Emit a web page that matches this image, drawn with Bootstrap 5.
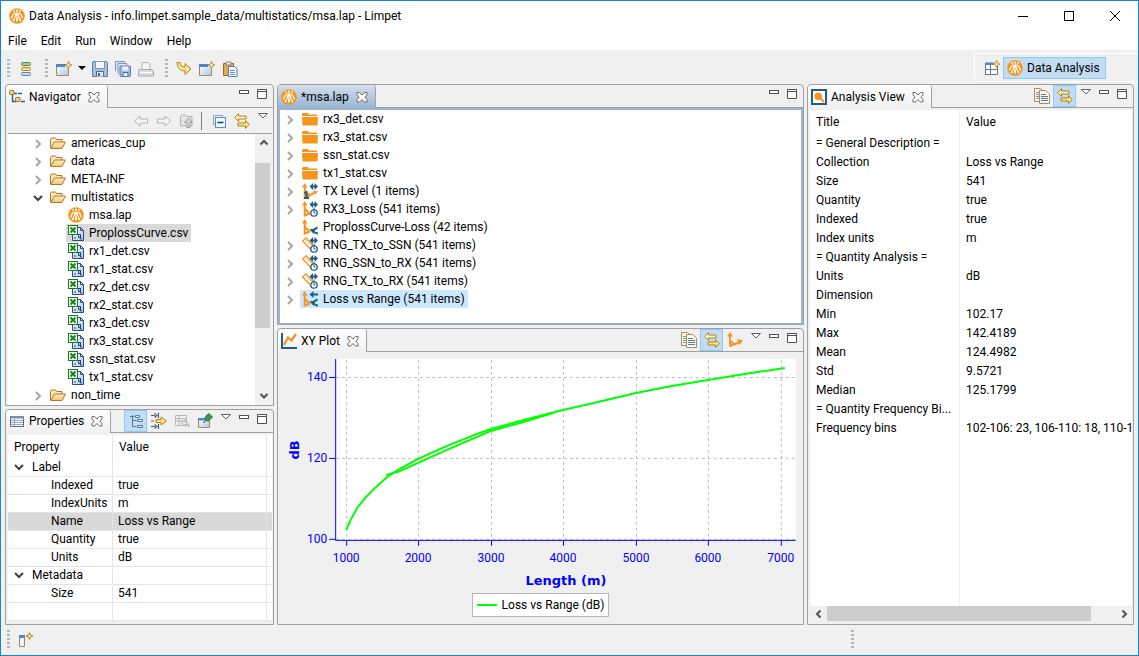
<!DOCTYPE html>
<html lang="en">
<head>
<meta charset="utf-8">
<meta name="viewport" content="width=device-width, initial-scale=1">
<title>Data Analysis - Limpet</title>
<link href="https://cdn.jsdelivr.net/npm/bootstrap@5.3.0/dist/css/bootstrap.min.css" rel="stylesheet">
<style>
  :root { --face: #f0f0f0; --edge: #a0a0a0; --hot: #c1dcf3; --hot-edge: #90c8f6; --frame: #99b4d1; }
  body { font-family: Roboto, "Open Sans", sans-serif; font-size: 12px; line-height: 18px; color: #000; background: var(--face); }
  .app { border: 1px solid #1883d7; background: var(--face); }
  svg { display: block; flex: none; }
  .ic { width: 16px; height: 16px; }
  button { font: inherit; color: inherit; }
  .flat { border: 0; background: none; padding: 0; display: flex; align-items: center; justify-content: center; }

  .title-row { height: 30px; padding-left: 8px; background: #fff; }
  .win-btn { width: 46px; height: 30px; }
  .menu-row { height: 19px; background: #fff; }
  .menu-row a { color: #000; text-decoration: none; padding: 0 7px; }
  .tool-row { height: 34px; }
  .tool-group { padding: 3px 0 0 6px; }
  .tool { width: 23px; height: 22px; }
  .tool.arrow { width: 13px; }
  .grip { width: 3px; height: 20px; margin-right: 4px; background: repeating-linear-gradient(#b4b4b4 0 2px, transparent 2px 4px); }
  .perspectives { border: solid #fff; border-width: 1px 0 1px 1px; border-radius: 4px 0 0 4px; height: 29px; width: 164px; padding: 1px 0 0 5px; }
  .perspective-on { height: 22px; padding: 0 5px 0 3px; border: 1px solid var(--hot-edge); background: var(--hot); gap: 4px; }

  .workbench { gap: 3px; padding: 0 4px; }
  .stack { gap: 3px; flex-basis: 0; }
  .w-left { flex-grow: 269; } .w-mid { flex-grow: 527; } .w-right { flex-grow: 327; }
  .view { border: 1px solid var(--edge); border-radius: 4px 4px 0 0; min-height: 0; flex-basis: 0; }
  .h-nav { flex-grow: 322; } .h-props { flex-grow: 216; } .h-edit { flex-grow: 241; } .h-plot { flex-grow: 297; } .h-full { flex-grow: 1; }
  .view-head { height: 23px; flex: none; background: linear-gradient(var(--edge), var(--edge)) bottom / 100% 1px no-repeat; padding-right: 2px; }
  .view-tab { height: 23px; padding: 0 6px 0 3px; gap: 4px; border-right: 1px solid var(--edge); border-radius: 4px 3px 0 0; background: linear-gradient(#fff, #f0f0f0); }
  .editor-tab { background: linear-gradient(#d3e0ee, #99b4d1); }
  .shut { width: 14px; height: 14px; margin-left: 2px; }
  .btns { height: 21px; }
  .on { background: var(--hot); border: 1px solid var(--hot-edge); }
  .w-tri { width: 19px; } .w-win { width: 18px; }
  .w-tri, .w-win { padding-top: 1px; }
  .pane { margin: 0 1px 0 2px; background: #fff; min-height: 0; }
  .pane-grid { margin-top: 2px; }
  .nav-tools { height: 26px; margin: 0 1px 0 2px; border-bottom: 1px solid var(--edge); }
  .nav-tools .w-tri { margin-bottom: 6px; }
  .divider { width: 1px; height: 18px; background: #808080; margin: 0 5px 0 3px; }

  .tree li > .node { display: flex; height: 18px; padding-left: 22px; }
  .tree ul .node { padding-left: 40px; }
  .editor-tree li > .node { padding-left: 2px; }
  .twist { width: 16px; height: 20px; margin-right: 2px; }
  .lab { display: flex; align-items: center; gap: 5px; padding: 0 3px 0 2px; white-space: nowrap; }
  .lab.dim { background: #d9d9d9; } .lab.pick { background: #cce8ff; }
  .editor-frame { background: #fff; border: solid var(--frame); border-width: 2px 2px 1px; min-height: 0; }

  .vbar { width: 17px; background: var(--face); }
  .vbar button { height: 18px; }
  .vbar .thumb { background: #cdcdcd; width: 15px; margin: 11px 0 59px; }
  .hbar { height: 18px; margin: 0 1px 0 2px; }
  .hbar .thumb { background: #cdcdcd; height: 15px; margin-right: 24px; }
  .hbar button { width: 17px; height: 15px; }

  .data-grid { width: 100%; table-layout: fixed; border-collapse: separate; border-spacing: 0; }
  .data-grid th, .data-grid td { font-weight: 400; padding: 0; white-space: nowrap; overflow: hidden; text-overflow: clip; }
  .data-grid thead th { height: 24px; line-height: 24px; }
  .props th, .props td { border-right: 1px solid #e5e5e5; }
  .props tr > :last-child { border-right: 0; }
  .props tbody td { height: 18px; line-height: 17px; border-bottom: 1px solid #e5e5e5; }
  .props tbody td:nth-child(2) { padding-left: 5px; }
  .props thead th { padding-left: 6px; }
  .props .leaf { padding-left: 43px; }
  .props .group { display: flex; height: 17px; padding-left: 3px; gap: 5px; }
  .props .group .twist { height: 17px; margin: 0; }
  .props .picked td { background: #d9d9d9; }
  .analysis { background: linear-gradient(#e6eef7, #e6eef7) 149px 0 / 1px 100% no-repeat #fff; }
  .analysis td, .analysis th { padding-left: 6px; line-height: 19px; }
  .analysis td:first-child { text-overflow: ellipsis; padding-right: 4px; }

  .plot-area { min-height: 0; }
  .plot-area svg { width: 100%; height: 100%; min-height: 0; }
  .plot-area text { font-size: 12px; fill: #00f; }
  .plot-area .axis-name { font-family: "DejaVu Sans", sans-serif; font-weight: 700; font-size: 13px; }
  .legend-box { height: 24px; border: 1px solid #b8b8b8; background: #fff; padding: 0 4px; gap: 5px; margin-bottom: 7px; }
  .legend-line { width: 20px; height: 2px; background: #0f0; }
  .status-row { height: 30px; padding: 0 6px; }
</style>
</head>
<body>
<svg width="0" height="0" class="position-absolute" aria-hidden="true">
  <defs>
    <linearGradient id="gFold" x1="0" y1="0" x2="0" y2="1"><stop offset="0" stop-color="#fff3cf"/><stop offset="1" stop-color="#f0c468"/></linearGradient>
    <linearGradient id="gBlue" x1="0" y1="0" x2="1" y2="1"><stop offset="0" stop-color="#fff"/><stop offset="1" stop-color="#a9c8ea"/></linearGradient>
    <symbol id="limpet" viewBox="0 0 16 16"><circle cx="8" cy="8" r="7.8" fill="#f7941e"/><g fill="none" stroke="#fff" stroke-width="1.1"><path d="M8 3.500v9M7.200 5.500C6.500 8 5.800 10 4.600 12.500M8.800 5.500c.7 2.500 1.400 4.500 2.600 7M6.500 4.800C4.500 5.500 3.500 7 2.800 9.500M9.500 4.800c2 .7 3 2.200 3.700 4.700"/></g><g fill="#fff"><circle cx="5" cy="2.900" r=".9"/><circle cx="8" cy="2.600" r="1"/><circle cx="11" cy="2.900" r=".9"/><circle cx="2.700" cy="9.700" r=".8"/><circle cx="13.300" cy="9.700" r=".8"/><circle cx="4.600" cy="12.300" r="1"/><circle cx="11.400" cy="12.300" r="1"/><rect x="7.200" y="10" width="1.600" height="3.500"/></g></symbol>
    <symbol id="chev" viewBox="0 0 16 16"><path d="M6 4l4 4-4 4" fill="none" stroke="#a6a6a6" stroke-width="2"/></symbol>
    <symbol id="chevDown" viewBox="0 0 16 16"><path d="M4 6l4 4 4-4" fill="none" stroke="#404040" stroke-width="2"/></symbol>
    <symbol id="sbUp" viewBox="0 0 16 16"><path d="M4.500 9.500L8 6l3.500 3.500" fill="none" stroke="#505050" stroke-width="2"/></symbol>
    <symbol id="sbDown" viewBox="0 0 16 16"><path d="M4.500 6L8 9.500 11.500 6" fill="none" stroke="#505050" stroke-width="2"/></symbol>
    <symbol id="sbLeft" viewBox="0 0 16 16"><path d="M9.500 4.500L6 8l3.500 3.500" fill="none" stroke="#505050" stroke-width="2"/></symbol>
    <symbol id="sbRight" viewBox="0 0 16 16"><path d="M6.500 4.500L10 8l-3.500 3.500" fill="none" stroke="#505050" stroke-width="2"/></symbol>
    <symbol id="folder" viewBox="0 0 16 16"><path d="M.5 13V4.500l1-1.500h4l1 1.500h5.500v2.500" fill="#fbe6b0" stroke="#b3762b"/><path d="M.8 13.500L4.500 7h11L12 13.500z" fill="url(#gFold)" stroke="#b3762b"/></symbol>
    <symbol id="orangeFolder" viewBox="0 0 16 16"><path d="M1 2h5l1 1.500h8V5H0V3zM0 6h16l-.5 8.500H.5z" fill="#f7941e"/></symbol>
    <symbol id="csv" viewBox="0 0 16 16"><path d="M4.500 2.500h8l3 3v10h-11z" fill="url(#gBlue)" stroke="#2c4a86"/><path d="M12.500 2.500v3h3" fill="none" stroke="#2c4a86"/><rect x=".5" y=".5" width="9" height="9" fill="#eaf6e8" stroke="#1a7b23"/><path d="M2.500 2.500l5 5M7.500 2.500l-5 5" stroke="#1a7b23" stroke-width="1.800"/><path d="M10.500 9.500h2v3h-2zM12.500 9.500v4.500h1.500M6 13h2" fill="none" stroke="#243f78"/></symbol>
    <symbol id="xshut" viewBox="0 0 14 14"><path d="M2 2.500h2.500L7 5l2.500-2.500H12V5L9.800 7l2.200 2.500V12H9.500L7 9.500 4.500 12H2V9.500L4.200 7 2 5z" fill="#fdfdfd" stroke="#6c6c6c"/></symbol>
    <symbol id="vmin" viewBox="0 0 16 16"><rect x="3.500" y="4.500" width="9" height="3" fill="#fff" stroke="#505050"/></symbol>
    <symbol id="vmax" viewBox="0 0 16 16"><path d="M3.500 3.500h9v9h-9zM3.500 5.500h9" fill="#fff" stroke="#505050"/></symbol>
    <symbol id="vtri" viewBox="0 0 16 16"><path d="M3.500 3.500h9L8 8z" fill="#fff" stroke="#606060"/></symbol>
    <symbol id="navi" viewBox="0 0 16 16"><path d="M3.500 6v6.500h4M9 4.500h4M12 12.500h4M5 4.500h3" fill="none" stroke="#1f5f9d" stroke-width="1.400"/><rect x=".5" y="1.500" width="4.500" height="4" rx="1" fill="#f4cf86" stroke="#a8691c"/><rect x="6.500" y="8.500" width="4.500" height="4" rx="1" fill="#f4cf86" stroke="#a8691c"/></symbol>
    <symbol id="bars" viewBox="0 0 16 16"><rect x="3.500" y="1.500" width="9" height="3" rx="1" fill="#9fcf9c" stroke="#4e8a55"/><rect x="3.500" y="6.500" width="9" height="3" rx="1" fill="#ffe07c" stroke="#bc8a1c"/><rect x="3.500" y="11.500" width="9" height="3" rx="1" fill="#c4dbf3" stroke="#5b83b4"/></symbol>
    <symbol id="newwin" viewBox="0 0 16 16"><path d="M.5 3.500h12v11H.5z" fill="url(#gBlue)" stroke="#a88a50"/><path d="M0 3h9v3H0z" fill="#4f86c6"/><path d="M12.500 0l1 3 2.500 1-2.500 1-1 3-1-3L9 4l2.500-1z" fill="#ffeaa0" stroke="#b48a28" stroke-width=".8"/></symbol>
    <symbol id="save" viewBox="0 0 16 16"><path d="M1 .5h13.500l1 1v14H.5V1z" fill="#a9bfde" stroke="#5b7daf"/><rect x="3.500" y=".5" width="9" height="7" fill="#f4f6fb" stroke="#7b97c2"/><path d="M4.500 15.500v-5h7v5" fill="#e6ecf6" stroke="#49699c"/><path d="M6 12h2v3H6z" fill="#49699c"/></symbol>
    <symbol id="saveall" viewBox="0 0 16 16"><path d="M.5 10V.5h9v2M3 12.500V2.500h9v2" fill="#dce6f4" stroke="#8095b8"/><rect x="5" y="5" width="10.500" height="10.500" rx="1" fill="#a9bfde" stroke="#5b7daf"/><path d="M7.500 5.500h5.500v4H7.500z" fill="#f4f6fb"/><path d="M8 15v-3.500h5V15" fill="#e6ecf6" stroke="#49699c"/></symbol>
    <symbol id="print" viewBox="0 0 16 16"><path d="M4 8.500V1.500h6l2 2v5" fill="#f6f6f6" stroke="#b5b5b5"/><path d="M1 8.500h13l1.500 2v4.500H.5v-4.500z" fill="#dcdcdc" stroke="#aaa"/><path d="M2 11.500h12" stroke="#fff"/></symbol>
    <symbol id="curve" viewBox="0 0 16 16"><path d="M1 1.500h3c0 3 1.500 4.500 5 4.500V2.500L15 8l-6 5.500V10C4 10 1.500 6.500 1 1.500z" fill="#ffe191" stroke="#b4861e"/></symbol>
    <symbol id="paste" viewBox="0 0 16 16"><path d="M1.500 2.500h10v12h-10z" fill="#dda95a" stroke="#9c6c28"/><path d="M4 1h5v3H4z" fill="#e8e8e8" stroke="#777" stroke-width=".8"/><path d="M6.500 5.500h6l2.500 2.500v7.500H6.500z" fill="#f4f8ff" stroke="#5b7daf"/><path d="M8 9.500h5M8 11.500h5M8 13.500h5" stroke="#6e8fc4"/></symbol>
    <symbol id="persp" viewBox="0 0 16 16"><path d="M1.500 3.500h12v11h-12zM1.500 9.500h12M6.500 5v9" fill="#fff" stroke="#5f7f86"/><path d="M1 2.500h9v2.500H1z" fill="#4f86c6"/><path d="M12.500 0l1 3 2.500 1-2.500 1-1 3-1-3L9 4l2.500-1z" fill="#ffeaa0" stroke="#b48a28" stroke-width=".8"/></symbol>
    <symbol id="back" viewBox="0 0 16 16"><path d="M1.500 8L7 3v3h7.500v4H7v3z" fill="#f7f7f7" stroke="#b4b4b4"/></symbol>
    <symbol id="fwd" viewBox="0 0 16 16"><path d="M14.500 8L9 3v3H1.500v4H9v3z" fill="#f7f7f7" stroke="#b4b4b4"/></symbol>
    <symbol id="updir" viewBox="0 0 16 16"><path d="M1.500 13V3.500L3 2h3l1.500 1.500H13v9.500z" fill="#e4e4e4" stroke="#b0b0b0"/><path d="M9.500 5l4 4.500h-2.500v5H8v-5H5.500z" fill="#d5d5d5" stroke="#a0a0a0"/></symbol>
    <symbol id="collapse" viewBox="0 0 16 16"><path d="M2.500 2.500h9v2M2.500 2.500v9h2" fill="none" stroke="#7fa7cc"/><rect x="4.500" y="4.500" width="10" height="10" fill="#eef6ff" stroke="#5b8fc0"/><path d="M6.500 9.500h6" stroke="#123f74" stroke-width="1.600"/></symbol>
    <symbol id="sync" viewBox="0 0 16 16"><path d="M.7 4.500L4.500.6V3h7.500v3H4.500v2.400z" fill="#fff3c4" stroke="#b4801a"/><path d="M15.300 11.500L11.500 7.600V10H4v3h7.500v2.400z" fill="#ffe083" stroke="#b4801a"/></symbol>
    <symbol id="ptable" viewBox="0 0 16 16"><path d="M1.500 3.500h13v10h-13z" fill="#fff" stroke="#5c6b86"/><path d="M1 3h14v2.500H1z" fill="#7b8db0"/><path d="M2 7.500h12M2 9.500h12M2 11.500h12M5.500 5v8" stroke="#96a9c8"/></symbol>
    <symbol id="cats" viewBox="0 0 16 16"><path d="M4.500 2v11.500h4M4.500 7.500h4M2 3.500h4.500" fill="none" stroke="#567096"/><path d="M9.500 6.500h5v2h-5zM9.500 12.500h5v2h-5zM7.500 2.500h4v2h-4z" fill="#dceafa" stroke="#567096" stroke-width=".9"/></symbol>
    <symbol id="filt" viewBox="0 0 16 16"><path d="M0 2.500h4M0 13.500h4M7.500 0v5M7.500 11v5M3.500.5l2.500 2-2.500 2M3.500 11.500l2.500 2-2.500 2M0 8h3" fill="none" stroke="#476089" stroke-width="1.200"/><path d="M5 6.500h5V4l5.500 4-5.500 4V9.500H5z" fill="#ffe083" stroke="#b4801a"/></symbol>
    <symbol id="restore" viewBox="0 0 16 16"><path d="M1.500 2.500h11v10h-11zM1.500 5.500h11M1.500 8h11M5 3v9" fill="#f3f3f3" stroke="#b8b8b8"/><path d="M7 10l4-3v2c3 0 4 2 4 5-1-2-2-2.500-4-2.500v1.500z" fill="#eee" stroke="#aaa"/></symbol>
    <symbol id="pinwin" viewBox="0 0 16 16"><path d="M1.500 5.500h11v9h-11z" fill="url(#gBlue)" stroke="#a88a50"/><path d="M1 5h9v2.500H1z" fill="#4f86c6"/><path d="M6.500 10l3-3.500" stroke="#333"/><path d="M9 3l3-2.500L15.500 4 13 6.500l-2 2L8 5.500z" fill="#3c9850" stroke="#19602a" stroke-width=".8"/></symbol>
    <symbol id="copy" viewBox="0 0 16 16"><path d="M.5.500h6l2 2V13.500h-8z" fill="#fbf5df" stroke="#a09060"/><path d="M2 4.500h3M2 6.500h3M2 8.500h3M2 10.500h3" stroke="#7d93bd"/><path d="M5.500 2.500h6l4 3.500v9.500h-10z" fill="#fdfaec" stroke="#a09060"/><path d="M7 6.500h5M7 8.500h7M7 10.500h7M7 12.500h7" stroke="#5776b4"/></symbol>
    <symbol id="lens" viewBox="0 0 16 16"><rect x="1" y="1" width="14" height="14" fill="#fff" stroke="#1f5d85" stroke-width="2"/><circle cx="7.200" cy="7.200" r="3.800" fill="#f7941e"/><path d="M9 9l4 4" stroke="#f7941e" stroke-width="2"/></symbol>
    <symbol id="xy" viewBox="0 0 16 16"><path d="M1 0v15h15" fill="none" stroke="#1f5d85" stroke-width="2"/><path d="M3 12l4-7.500 3.500 3L15 1" fill="none" stroke="#f7941e" stroke-width="2.200"/></symbol>
    <symbol id="axes" viewBox="0 0 16 16"><path d="M3 14.500V3M3 14l9-3.500M3 8.500l4.500 4" fill="none" stroke="#f7941e" stroke-width="1.900"/><path d="M0 4.500L3 0l3 4.500zM10 7l6 1.500-3.500 4.500z" fill="#f7941e"/></symbol>
    <symbol id="oAxis" viewBox="0 0 16 16"><path d="M2.700 3v11.500L8 12.500M3 8l5 5" fill="none" stroke="#f7941e" stroke-width="2"/><path d="M0 4.500L2.700 0 5.500 4.500z" fill="#f7941e"/></symbol>
    <symbol id="bArrows" viewBox="0 0 16 16"><path d="M7.500 3.500l3.500-3.500v7zM16 3.500L12.500 0v7z" fill="#1f5d85"/><path d="M10 3.500h4" stroke="#1f5d85" stroke-width="2"/></symbol>
    <symbol id="txl" viewBox="0 0 16 16"><use href="#oAxis"/><use href="#bArrows"/><path d="M7 12.500l5-2.500" stroke="#f7941e" stroke-width="2"/><path d="M11 8h5l-3 4z" fill="#f7941e"/><path d="M2 9.500l2-1.500h1.500v6h1.500v2H2v-2h1.500v-3.500H2z" fill="#1f5d85"/></symbol>
    <symbol id="loss" viewBox="0 0 16 16"><use href="#oAxis"/><use href="#bArrows"/><circle cx="12" cy="12" r="3.200" fill="#fff" stroke="#1f5d85" stroke-width="1.300"/><path d="M12 10v2h1.500M12 7v2" fill="none" stroke="#1f5d85"/></symbol>
    <symbol id="prop" viewBox="0 0 16 16"><use href="#oAxis"/><path d="M7.500 10h5l-1 5z" fill="#1f5d85"/><path d="M15.500 8.500C13 9.500 11.500 11 11 12c1.500 1.800 3 2.500 5 2.500" fill="none" stroke="#1f5d85" stroke-width="1.900"/></symbol>
    <symbol id="ruler" viewBox="0 0 16 16"><path d="M.7 4L4 .8l10 11-3 3z" fill="#fff" stroke="#f7941e" stroke-width="1.300"/><path d="M5.500 3L4 4.500M7.500 5L6 6.500M9.500 7L8 8.500" stroke="#f7941e"/><use href="#bArrows"/><circle cx="12" cy="12" r="3.200" fill="#fff" stroke="#1f5d85" stroke-width="1.300"/><path d="M12 10v2h1.500M12 7v2" fill="none" stroke="#1f5d85"/></symbol>
    <symbol id="lvr" viewBox="0 0 16 16"><use href="#prop"/><path d="M7.500 3.500L11.500 0v2.500H16v2h-4.500V7z" fill="#1f5d85"/></symbol>
    <symbol id="fast" viewBox="0 0 16 16"><path d="M1.500 4.500h5v10h-5z" fill="#eef5fb" stroke="#a08a58"/><path d="M1 3h6v3H1z" fill="#4f86c6"/><path d="M11.500.5l1 2.500 2.500 1-2.500 1-1 2.500-1-2.500L8 4l2.500-1z" fill="#ffeaa0" stroke="#b48a28"/></symbol>
  </defs>
</svg>

<div class="app d-flex flex-column vh-100 overflow-hidden">
  <header class="title-row d-flex align-items-center">
    <svg class="ic me-1"><use href="#limpet"/></svg>
    <span>Data Analysis - info.limpet.sample_data/multistatics/msa.lap - Limpet</span>
    <div class="d-flex ms-auto">
      <button class="flat win-btn" aria-label="Minimize"><svg width="12" height="12"><path d="M1 6.500h10" stroke="#000"/></svg></button>
      <button class="flat win-btn" aria-label="Maximize"><svg width="12" height="12"><rect x="1.500" y="1.500" width="9" height="9" fill="none" stroke="#000"/></svg></button>
      <button class="flat win-btn" aria-label="Close"><svg width="12" height="12"><path d="M1 1l10 10M11 1L1 11" stroke="#000"/></svg></button>
    </div>
  </header>
  <nav class="menu-row d-flex align-items-center" aria-label="Main menu">
    <a href="#">File</a><a href="#">Edit</a><a href="#">Run</a><a href="#">Window</a><a href="#">Help</a>
  </nav>

  <div class="tool-row d-flex align-items-center flex-shrink-0">
    <div class="tool-group d-flex align-items-center">
      <span class="grip"></span>
      <button class="flat tool me-2" aria-label="Stack"><svg class="ic"><use href="#bars"/></svg></button>
      <span class="grip"></span>
      <button class="flat tool" aria-label="New"><svg class="ic"><use href="#newwin"/></svg></button>
      <button class="flat tool arrow" aria-label="New menu"><svg width="8" height="5"><path d="M0 0h8L4 4z"/></svg></button>
      <button class="flat tool" aria-label="Save"><svg class="ic"><use href="#save"/></svg></button>
      <button class="flat tool" aria-label="Save all"><svg class="ic"><use href="#saveall"/></svg></button>
      <button class="flat tool me-2" aria-label="Print"><svg class="ic"><use href="#print"/></svg></button>
      <span class="grip"></span>
      <button class="flat tool" aria-label="Run step"><svg class="ic"><use href="#curve"/></svg></button>
      <button class="flat tool" aria-label="New window"><svg class="ic"><use href="#newwin"/></svg></button>
      <button class="flat tool" aria-label="Paste"><svg class="ic"><use href="#paste"/></svg></button>
    </div>
    <div class="perspectives d-flex align-items-center ms-auto">
      <button class="flat tool" aria-label="Open perspective"><svg class="ic"><use href="#persp"/></svg></button>
      <button class="flat perspective-on"><svg class="ic"><use href="#limpet"/></svg>Data Analysis</button>
    </div>
  </div>

  <main class="workbench d-flex flex-grow-1 overflow-hidden">
    <div class="stack w-left d-flex flex-column overflow-hidden">
      <section class="view h-nav d-flex flex-column overflow-hidden">
        <div class="view-head d-flex justify-content-between">
          <div class="view-tab d-flex align-items-center"><svg class="ic"><use href="#navi"/></svg>Navigator<button class="flat shut" aria-label="Close Navigator"><svg width="14" height="14"><use href="#xshut"/></svg></button></div>
          <div class="btns d-flex align-items-start">
            <button class="flat w-win" aria-label="Minimize"><svg class="ic"><use href="#vmin"/></svg></button>
            <button class="flat w-win" aria-label="Maximize"><svg class="ic"><use href="#vmax"/></svg></button>
          </div>
        </div>
        <div class="nav-tools d-flex justify-content-end align-items-center flex-shrink-0">
          <button class="flat tool" aria-label="Back"><svg class="ic"><use href="#back"/></svg></button>
          <button class="flat tool" aria-label="Forward"><svg class="ic"><use href="#fwd"/></svg></button>
          <button class="flat tool" aria-label="Up"><svg class="ic"><use href="#updir"/></svg></button>
          <span class="divider"></span>
          <button class="flat tool" aria-label="Collapse all"><svg class="ic"><use href="#collapse"/></svg></button>
          <button class="flat tool" aria-label="Link with editor"><svg class="ic"><use href="#sync"/></svg></button>
          <button class="flat w-tri" aria-label="View menu"><svg class="ic"><use href="#vtri"/></svg></button>
        </div>
        <div class="pane d-flex flex-grow-1 overflow-hidden">
          <ul class="tree list-unstyled mb-0 flex-grow-1">
            <li><div class="node"><button class="flat twist" aria-label="Expand"><svg class="ic"><use href="#chev"/></svg></button><span class="lab"><svg class="ic"><use href="#folder"/></svg>americas_cup</span></div></li>
            <li><div class="node"><button class="flat twist" aria-label="Expand"><svg class="ic"><use href="#chev"/></svg></button><span class="lab"><svg class="ic"><use href="#folder"/></svg>data</span></div></li>
            <li><div class="node"><button class="flat twist" aria-label="Expand"><svg class="ic"><use href="#chev"/></svg></button><span class="lab"><svg class="ic"><use href="#folder"/></svg>META-INF</span></div></li>
            <li><div class="node"><button class="flat twist" aria-label="Collapse"><svg class="ic"><use href="#chevDown"/></svg></button><span class="lab"><svg class="ic"><use href="#folder"/></svg>multistatics</span></div>
              <ul class="list-unstyled">
                <li><div class="node"><span class="twist"></span><span class="lab"><svg class="ic"><use href="#limpet"/></svg>msa.lap</span></div></li>
                <li><div class="node"><span class="twist"></span><span class="lab dim"><svg class="ic"><use href="#csv"/></svg>ProplossCurve.csv</span></div></li>
                <li><div class="node"><span class="twist"></span><span class="lab"><svg class="ic"><use href="#csv"/></svg>rx1_det.csv</span></div></li>
                <li><div class="node"><span class="twist"></span><span class="lab"><svg class="ic"><use href="#csv"/></svg>rx1_stat.csv</span></div></li>
                <li><div class="node"><span class="twist"></span><span class="lab"><svg class="ic"><use href="#csv"/></svg>rx2_det.csv</span></div></li>
                <li><div class="node"><span class="twist"></span><span class="lab"><svg class="ic"><use href="#csv"/></svg>rx2_stat.csv</span></div></li>
                <li><div class="node"><span class="twist"></span><span class="lab"><svg class="ic"><use href="#csv"/></svg>rx3_det.csv</span></div></li>
                <li><div class="node"><span class="twist"></span><span class="lab"><svg class="ic"><use href="#csv"/></svg>rx3_stat.csv</span></div></li>
                <li><div class="node"><span class="twist"></span><span class="lab"><svg class="ic"><use href="#csv"/></svg>ssn_stat.csv</span></div></li>
                <li><div class="node"><span class="twist"></span><span class="lab"><svg class="ic"><use href="#csv"/></svg>tx1_stat.csv</span></div></li>
              </ul></li>
            <li><div class="node"><button class="flat twist" aria-label="Expand"><svg class="ic"><use href="#chev"/></svg></button><span class="lab"><svg class="ic"><use href="#folder"/></svg>non_time</span></div></li>
          </ul>
          <div class="vbar d-flex flex-column flex-shrink-0">
            <button class="flat" aria-label="Scroll up"><svg class="ic"><use href="#sbUp"/></svg></button>
            <div class="thumb flex-grow-1"></div>
            <button class="flat" aria-label="Scroll down"><svg class="ic"><use href="#sbDown"/></svg></button>
          </div>
        </div>
      </section>

      <section class="view h-props d-flex flex-column overflow-hidden">
        <div class="view-head d-flex justify-content-between">
          <div class="view-tab d-flex align-items-center"><svg class="ic"><use href="#ptable"/></svg>Properties<button class="flat shut" aria-label="Close Properties"><svg width="14" height="14"><use href="#xshut"/></svg></button></div>
          <div class="btns d-flex align-items-start">
            <button class="flat tool on" aria-label="Show categories"><svg class="ic"><use href="#cats"/></svg></button>
            <button class="flat tool" aria-label="Show advanced"><svg class="ic"><use href="#filt"/></svg></button>
            <button class="flat tool" aria-label="Restore default"><svg class="ic"><use href="#restore"/></svg></button>
            <button class="flat tool" aria-label="Pin"><svg class="ic"><use href="#pinwin"/></svg></button>
            <button class="flat w-tri" aria-label="View menu"><svg class="ic"><use href="#vtri"/></svg></button>
            <button class="flat w-win" aria-label="Minimize"><svg class="ic"><use href="#vmin"/></svg></button>
            <button class="flat w-win" aria-label="Maximize"><svg class="ic"><use href="#vmax"/></svg></button>
          </div>
        </div>
        <div class="pane pane-grid overflow-hidden">
          <table class="data-grid props">
            <colgroup><col style="width:105px"><col><col style="width:5px"></colgroup>
            <thead><tr><th>Property</th><th>Value</th><th></th></tr></thead>
            <tbody>
              <tr><td><div class="group"><button class="flat twist" aria-label="Collapse"><svg class="ic"><use href="#chevDown"/></svg></button>Label</div></td><td></td><td></td></tr>
              <tr><td class="leaf">Indexed</td><td>true</td><td></td></tr>
              <tr><td class="leaf">IndexUnits</td><td>m</td><td></td></tr>
              <tr class="picked"><td class="leaf">Name</td><td>Loss vs Range</td><td></td></tr>
              <tr><td class="leaf">Quantity</td><td>true</td><td></td></tr>
              <tr><td class="leaf">Units</td><td>dB</td><td></td></tr>
              <tr><td><div class="group"><button class="flat twist" aria-label="Collapse"><svg class="ic"><use href="#chevDown"/></svg></button>Metadata</div></td><td></td><td></td></tr>
              <tr><td class="leaf">Size</td><td>541</td><td></td></tr>
              <tr><td></td><td></td><td></td></tr>
            </tbody>
          </table>
        </div>
      </section>
    </div>

    <div class="stack w-mid d-flex flex-column overflow-hidden">
      <section class="view h-edit d-flex flex-column overflow-hidden">
        <div class="view-head d-flex justify-content-between">
          <div class="view-tab editor-tab d-flex align-items-center"><svg class="ic"><use href="#limpet"/></svg>*msa.lap<button class="flat shut" aria-label="Close msa.lap"><svg width="14" height="14"><use href="#xshut"/></svg></button></div>
          <div class="btns d-flex align-items-start">
            <button class="flat w-win" aria-label="Minimize"><svg class="ic"><use href="#vmin"/></svg></button>
            <button class="flat w-win" aria-label="Maximize"><svg class="ic"><use href="#vmax"/></svg></button>
          </div>
        </div>
        <div class="editor-frame flex-grow-1 overflow-hidden">
          <ul class="tree editor-tree list-unstyled mb-0">
            <li><div class="node"><button class="flat twist" aria-label="Expand"><svg class="ic"><use href="#chev"/></svg></button><span class="lab"><svg class="ic"><use href="#orangeFolder"/></svg>rx3_det.csv</span></div></li>
            <li><div class="node"><button class="flat twist" aria-label="Expand"><svg class="ic"><use href="#chev"/></svg></button><span class="lab"><svg class="ic"><use href="#orangeFolder"/></svg>rx3_stat.csv</span></div></li>
            <li><div class="node"><button class="flat twist" aria-label="Expand"><svg class="ic"><use href="#chev"/></svg></button><span class="lab"><svg class="ic"><use href="#orangeFolder"/></svg>ssn_stat.csv</span></div></li>
            <li><div class="node"><button class="flat twist" aria-label="Expand"><svg class="ic"><use href="#chev"/></svg></button><span class="lab"><svg class="ic"><use href="#orangeFolder"/></svg>tx1_stat.csv</span></div></li>
            <li><div class="node"><button class="flat twist" aria-label="Expand"><svg class="ic"><use href="#chev"/></svg></button><span class="lab"><svg class="ic"><use href="#txl"/></svg>TX Level (1 items)</span></div></li>
            <li><div class="node"><button class="flat twist" aria-label="Expand"><svg class="ic"><use href="#chev"/></svg></button><span class="lab"><svg class="ic"><use href="#loss"/></svg>RX3_Loss (541 items)</span></div></li>
            <li><div class="node"><span class="twist"></span><span class="lab"><svg class="ic"><use href="#prop"/></svg>ProplossCurve-Loss (42 items)</span></div></li>
            <li><div class="node"><button class="flat twist" aria-label="Expand"><svg class="ic"><use href="#chev"/></svg></button><span class="lab"><svg class="ic"><use href="#ruler"/></svg>RNG_TX_to_SSN (541 items)</span></div></li>
            <li><div class="node"><button class="flat twist" aria-label="Expand"><svg class="ic"><use href="#chev"/></svg></button><span class="lab"><svg class="ic"><use href="#ruler"/></svg>RNG_SSN_to_RX (541 items)</span></div></li>
            <li><div class="node"><button class="flat twist" aria-label="Expand"><svg class="ic"><use href="#chev"/></svg></button><span class="lab"><svg class="ic"><use href="#ruler"/></svg>RNG_TX_to_RX (541 items)</span></div></li>
            <li><div class="node"><button class="flat twist" aria-label="Expand"><svg class="ic"><use href="#chev"/></svg></button><span class="lab pick"><svg class="ic"><use href="#lvr"/></svg>Loss vs Range (541 items)</span></div></li>
          </ul>
        </div>
      </section>

      <section class="view h-plot d-flex flex-column overflow-hidden">
        <div class="view-head d-flex justify-content-between">
          <div class="view-tab d-flex align-items-center"><svg class="ic"><use href="#xy"/></svg>XY Plot<button class="flat shut" aria-label="Close XY Plot"><svg width="14" height="14"><use href="#xshut"/></svg></button></div>
          <div class="btns d-flex align-items-start">
            <button class="flat tool" aria-label="Copy"><svg class="ic"><use href="#copy"/></svg></button>
            <button class="flat tool on" aria-label="Follow selection"><svg class="ic"><use href="#sync"/></svg></button>
            <button class="flat tool" aria-label="Switch axes"><svg class="ic"><use href="#axes"/></svg></button>
            <button class="flat w-tri" aria-label="View menu"><svg class="ic"><use href="#vtri"/></svg></button>
            <button class="flat w-win" aria-label="Minimize"><svg class="ic"><use href="#vmin"/></svg></button>
            <button class="flat w-win" aria-label="Maximize"><svg class="ic"><use href="#vmax"/></svg></button>
          </div>
        </div>
        <div class="plot-area d-flex flex-column align-items-center flex-grow-1">
          <svg viewBox="0 0 525 241" class="flex-fill" role="img" aria-label="Loss vs Range">
            <rect x="58" y="7" width="460" height="181" fill="#fff"/>
            <path d="M68.500 8v180M140.500 8v180M213.500 8v180M285.500 8v180M358.500 8v180M430.500 8v180M503.500 8v180M58 25.500h460M58 106.500h460M58 187.500h460" stroke="#bebebe" stroke-dasharray="3 3" fill="none"/>
            <path d="M57.500 7v182M58 188.500h460M51 25.500h6M51 106.500h6M51 187.500h6M68.500 189v5M140.500 189v5M213.500 189v5M285.500 189v5M358.500 189v5M430.500 189v5M503.500 189v5" stroke="#00f" fill="none"/>
            <path d="M68 178L72 169 79 156 87 146 98 135 109 125 120 118 140 107 169 94 199 82 213 77 242 69 285 58 320 50 358 41 394 34 430 28 467 22 507 16" stroke-linejoin="round" fill="none" stroke="#0f0" stroke-width="2"/>
            <path d="M108 123L120 120 140 111 169 98 199 85 213 79 242 71 275 61" stroke-linejoin="round" fill="none" stroke="#0f0" stroke-width="2"/>
            <g text-anchor="end"><text x="49" y="29">140</text><text x="49" y="110">120</text><text x="49" y="191">100</text></g>
            <g text-anchor="middle"><text x="68" y="210">1000</text><text x="140" y="210">2000</text><text x="213" y="210">3000</text><text x="285" y="210">4000</text><text x="358" y="210">5000</text><text x="430" y="210">6000</text><text x="503" y="210">7000</text>
              <text class="axis-name" x="288" y="233">Length (m)</text>
              <text class="axis-name" transform="translate(21 98) rotate(-90)">dB</text></g>
          </svg>
          <div class="legend-box d-flex align-items-center flex-shrink-0"><span class="legend-line"></span>Loss vs Range (dB)</div>
        </div>
      </section>
    </div>

    <div class="stack w-right d-flex flex-column overflow-hidden">
      <section class="view h-full d-flex flex-column overflow-hidden">
        <div class="view-head d-flex justify-content-between">
          <div class="view-tab d-flex align-items-center"><svg class="ic"><use href="#lens"/></svg>Analysis View<button class="flat shut" aria-label="Close Analysis View"><svg width="14" height="14"><use href="#xshut"/></svg></button></div>
          <div class="btns d-flex align-items-start">
            <button class="flat tool" aria-label="Copy"><svg class="ic"><use href="#copy"/></svg></button>
            <button class="flat tool on" aria-label="Follow selection"><svg class="ic"><use href="#sync"/></svg></button>
            <button class="flat w-tri" aria-label="View menu"><svg class="ic"><use href="#vtri"/></svg></button>
            <button class="flat w-win" aria-label="Minimize"><svg class="ic"><use href="#vmin"/></svg></button>
            <button class="flat w-win" aria-label="Maximize"><svg class="ic"><use href="#vmax"/></svg></button>
          </div>
        </div>
        <div class="pane pane-grid analysis flex-grow-1 overflow-hidden">
          <table class="data-grid">
            <colgroup><col style="width:150px"><col></colgroup>
            <thead><tr><th>Title</th><th>Value</th></tr></thead>
            <tbody>
              <tr><td>= General Description =</td><td></td></tr>
              <tr><td>Collection</td><td>Loss vs Range</td></tr>
              <tr><td>Size</td><td>541</td></tr>
              <tr><td>Quantity</td><td>true</td></tr>
              <tr><td>Indexed</td><td>true</td></tr>
              <tr><td>Index units</td><td>m</td></tr>
              <tr><td>= Quantity Analysis =</td><td></td></tr>
              <tr><td>Units</td><td>dB</td></tr>
              <tr><td>Dimension</td><td></td></tr>
              <tr><td>Min</td><td>102.17</td></tr>
              <tr><td>Max</td><td>142.4189</td></tr>
              <tr><td>Mean</td><td>124.4982</td></tr>
              <tr><td>Std</td><td>9.5721</td></tr>
              <tr><td>Median</td><td>125.1799</td></tr>
              <tr><td>= Quantity Frequency Bi...</td><td></td></tr>
              <tr><td>Frequency bins</td><td>102-106: 23, 106-110: 18, 110-11</td></tr>
            </tbody>
          </table>
        </div>
        <div class="hbar d-flex flex-shrink-0">
          <button class="flat" aria-label="Scroll left"><svg class="ic"><use href="#sbLeft"/></svg></button>
          <div class="thumb flex-grow-1"></div>
          <button class="flat" aria-label="Scroll right"><svg class="ic"><use href="#sbRight"/></svg></button>
        </div>
      </section>
    </div>
  </main>

  <footer class="status-row d-flex align-items-center flex-shrink-0">
    <div class="d-flex align-items-center w-75"><span class="grip"></span><button class="flat ms-1" aria-label="Fast view"><svg class="ic"><use href="#fast"/></svg></button></div>
    <span class="grip"></span>
  </footer>
</div>
<script src="https://cdn.jsdelivr.net/npm/bootstrap@5.3.0/dist/js/bootstrap.bundle.min.js"></script>
</body>
</html>
